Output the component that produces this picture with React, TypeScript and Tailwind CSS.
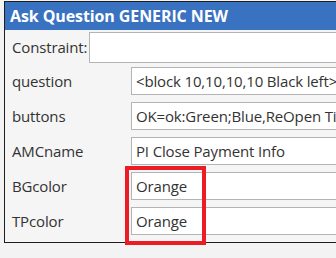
type Field = {
  label: string;
  value: string;
};

const fields: Field[] = [
  { label: "question", value: "<block 10,10,10,10 Black left> <" },
  { label: "buttons", value: "OK=ok:Green;Blue,ReOpen Ticket" },
  { label: "AMCname", value: "PI Close Payment Info" },
  { label: "BGcolor", value: "Orange" },
  { label: "TPcolor", value: "Orange" },
];

export default function App() {
  return (
    <div
      className="relative h-[258px] w-[336px] overflow-hidden bg-[#f3f3f3] pl-1 pt-px"
      style={{ fontFamily: '"Open Sans", "Noto Sans", sans-serif' }}
    >
      <div className="w-[360px] border border-[#1e1e1e] bg-[#f5f5f5]">

        {/* Title bar */}
        <div className="flex h-[28px] items-center bg-[#3a72c2] pl-[5px] text-[16px] font-bold tracking-[-0.1px] text-white">
          Ask Question GENERIC NEW
        </div>

        <div className="flex h-[212px] flex-col pl-[7px] pt-[2px] text-[15px] tracking-[-0.15px] text-[#333]">

          {/* Constraint */}
          <div className="flex h-[31px] items-center">
            <div className="w-[77px]">Constraint:</div>
            <div className="h-[31px] flex-1 border border-[#b4b4b4] bg-white" />
          </div>

          <div className="mt-[4px] flex flex-col gap-[7px]">
            {fields.map((f) => (
              <div key={f.label} className="flex h-[28px] items-center">
                <div className="w-[119px]">{f.label}</div>
                <div className="flex h-[28px] flex-1 items-center overflow-hidden whitespace-nowrap border border-[#b4b4b4] bg-white pl-[4px]">
                  {f.value}
                </div>
              </div>
            ))}
          </div>

        </div>
      </div>

      {/* Red highlight */}
      <div className="absolute left-[125px] top-[166px] h-[79px] w-[81px] border-[4px] border-[#ec1c24]" />
    </div>
  );
}
